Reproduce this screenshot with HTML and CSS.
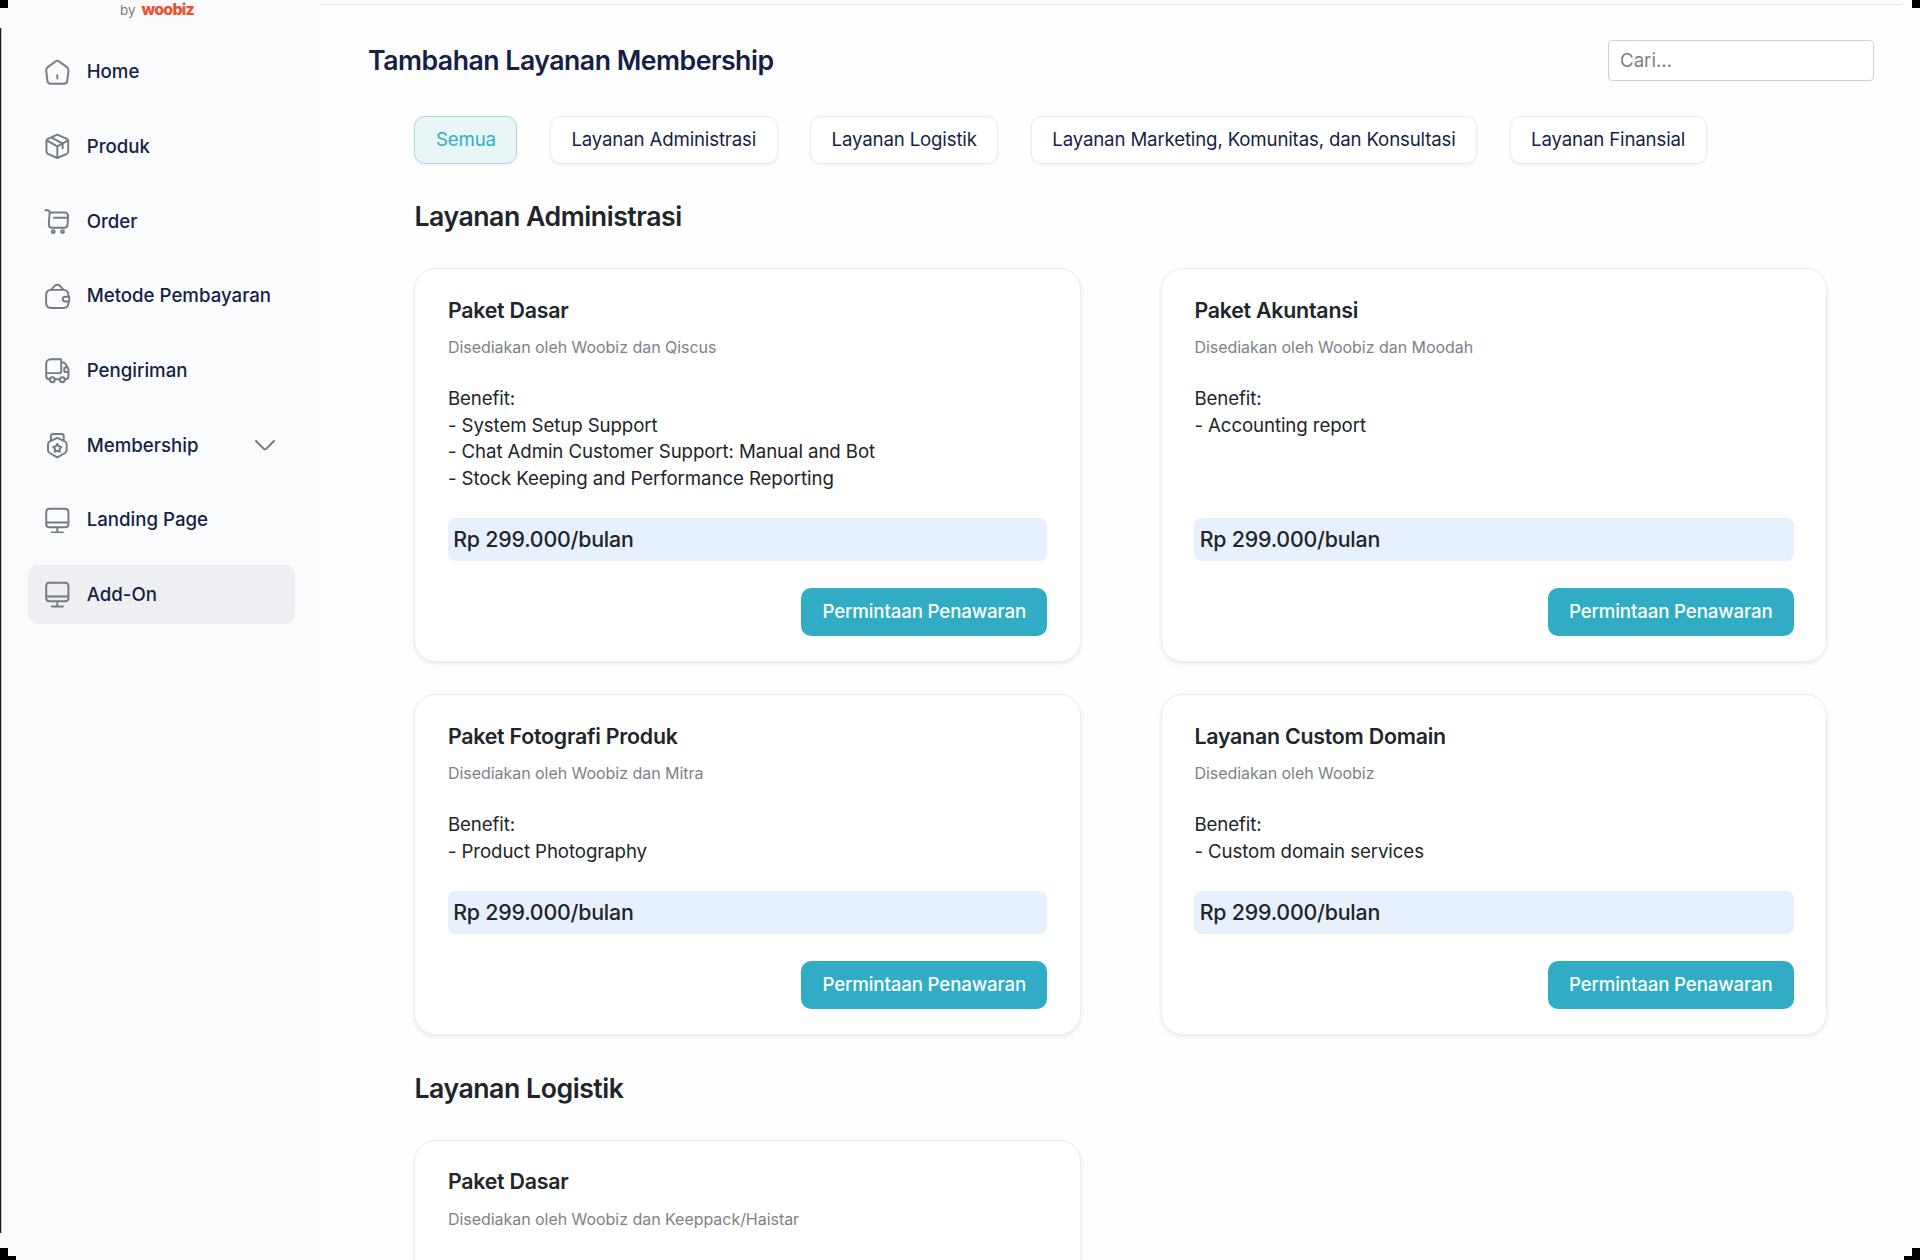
FILE: index.html
```html
<!DOCTYPE html>
<html lang="id">
<head>
<meta charset="utf-8">
<title>Tambahan Layanan Membership</title>
<link rel="stylesheet" href="styles.css">
</head>
<body>
<div class="app">
  <aside class="sidebar">
    <div class="brand"><span class="brand-by">by</span><span class="brand-name">woobiz</span></div>
    <nav class="nav">
      <a class="nav-item"><svg class="icon" viewBox="0 0 24 24"><path d="M10.600 2 3.400 7.300c-1 .8-1.500 2-1.400 3.300l1.100 9c.2 1.500 1.400 2.600 2.900 2.600h12c1.500 0 2.700-1.100 2.900-2.600l1.100-9c.1-1.300-.4-2.500-1.400-3.300l-7.200-5.300c-.8-.6-2-.6-2.800 0ZM12 17.500v-3"/></svg><span>Home</span></a>
      <a class="nav-item"><svg class="icon" viewBox="0 0 24 24"><path d="M12 1.500 20.500 5.300c.8.400 1.300 1.200 1.300 2.200v9c0 1-.5 1.800-1.300 2.200L12 22.500l-8.500-3.800c-.8-.400-1.300-1.200-1.300-2.200v-9c0-1 .5-1.800 1.300-2.200ZM2.800 6.800 12 12l9.200-5.200M12 12v10.300M7 4.200l9.800 5.400v4.200"/></svg><span>Produk</span></a>
      <a class="nav-item"><svg class="icon" viewBox="0 0 24 24"><path d="M1.300 2h1.900c1.200 0 2 .9 1.900 2.100L4.300 14.700c-.1 1.700 1.100 3.100 2.800 3.100h11.100c1.600 0 2.900-1.200 3-2.800l.5-7.700c.1-1.700-1.200-3.200-2.900-3.200H5.200M9 8.800h12.300"/><circle cx="8.300" cy="21.300" r="1.300"/><circle cx="16.700" cy="21.300" r="1.300"/></svg><span>Order</span></a>
      <a class="nav-item"><svg class="icon" viewBox="0 0 24 24"><path d="M22 12.400V11c0-3-1.600-4.800-4.600-4.800H6.500C3.600 6.200 1.900 8 1.900 11v6.800c0 3 1.700 4.700 4.600 4.700h10.900c3 0 4.600-1.700 4.600-4.700v-1.100M22.700 12.300v4.300h-3.400c-1.300 0-2.400-.9-2.400-2.200s1.100-2.100 2.400-2.100ZM6.300 6.200l3.300-3.600c1.300-1.400 3.500-1.400 4.800 0l3.300 3.600"/></svg><span>Metode Pembayaran</span></a>
      <a class="nav-item"><svg class="icon" viewBox="0 0 24 24"><path d="M15.500 2v10.500c0 1.100-.9 2-2 2H2V6c0-2.200 1.800-4 4-4ZM2 14.500V17c0 1.700 1.300 3 3 3M15.500 5h2c.7 0 1.400.4 1.700 1l2.300 4c.3.500.5 1 .5 1.500V17c0 1.700-1.300 3-3 3M10 20h4M21.600 13.500h-2.400c-.6 0-1-.4-1-1v-2c0-.6.4-1 1-1h2"/><circle cx="7.500" cy="20.500" r="2.200"/><circle cx="16.500" cy="20.500" r="2.200"/></svg><span>Pengiriman</span></a>
      <a class="nav-item"><svg class="icon" viewBox="0 0 24 24"><path d="M12 5.200 18.800 8.500c1 .5 1.600 1.400 1.600 2.500v5.400c0 1-.5 2-1.500 2.500L12 22.800l-6.900-3.900c-1-.5-1.500-1.500-1.500-2.500V11c0-1.100.6-2 1.600-2.500ZM6.200 7.700V3.800c0-1.200.8-2 2-2h7.600c1.200 0 2 .8 2 2v3.900M12 10.700l1.300 2.100 2.400.6-1.600 1.900.2 2.500-2.300-.9-2.300.9.200-2.500-1.600-1.900 2.400-.6Z"/></svg><span>Membership</span><svg class="chevron" viewBox="0 0 20 11"><path d="m1 1 7.600 7.700a2 2 0 0 0 2.800 0L19 1"/></svg></a>
      <a class="nav-item"><svg class="icon" viewBox="0 0 24 24"><path d="M5 1.500h14c2.200 0 3 .8 3 3v10.800c0 2.200-.8 3-3 3H5c-2.200 0-3-.8-3-3V4.500c0-2.200.8-3 3-3ZM12 18.500V23M2 14h20M7 23h10"/></svg><span>Landing Page</span></a>
      <a class="nav-item active"><svg class="icon" viewBox="0 0 24 24"><path d="M5 1.500h14c2.200 0 3 .8 3 3v10.800c0 2.200-.8 3-3 3H5c-2.200 0-3-.8-3-3V4.500c0-2.200.8-3 3-3ZM12 18.500V23M2 14h20M7 23h10"/></svg><span>Add-On</span></a>
    </nav>
  </aside>

  <main class="main">
    <header class="header">
      <h1 class="page-title">Tambahan Layanan Membership</h1>
      <input class="search" type="text" placeholder="Cari...">
    </header>
    <div class="content">
      <div class="chips">
        <button class="chip selected">Semua</button>
        <button class="chip">Layanan Administrasi</button>
        <button class="chip">Layanan Logistik</button>
        <button class="chip">Layanan Marketing, Komunitas, dan Konsultasi</button>
        <button class="chip">Layanan Finansial</button>
      </div>

      <h2 class="section-title">Layanan Administrasi</h2>
      <section class="grid">
        <article class="card">
          <h3 class="card-title">Paket Dasar</h3>
          <p class="provider">Disediakan oleh Woobiz dan Qiscus</p>
          <div class="benefit">Benefit:<br>- System Setup Support<br>- Chat Admin Customer Support: Manual and Bot<br>- Stock Keeping and Performance Reporting</div>
          <div class="price">Rp 299.000/bulan</div>
          <button class="cta">Permintaan Penawaran</button>
        </article>
        <article class="card">
          <h3 class="card-title">Paket Akuntansi</h3>
          <p class="provider">Disediakan oleh Woobiz dan Moodah</p>
          <div class="benefit">Benefit:<br>- Accounting report</div>
          <div class="price">Rp 299.000/bulan</div>
          <button class="cta">Permintaan Penawaran</button>
        </article>
        <article class="card">
          <h3 class="card-title">Paket Fotografi Produk</h3>
          <p class="provider">Disediakan oleh Woobiz dan Mitra</p>
          <div class="benefit">Benefit:<br>- Product Photography</div>
          <div class="price">Rp 299.000/bulan</div>
          <button class="cta">Permintaan Penawaran</button>
        </article>
        <article class="card">
          <h3 class="card-title">Layanan Custom Domain</h3>
          <p class="provider">Disediakan oleh Woobiz</p>
          <div class="benefit">Benefit:<br>- Custom domain services</div>
          <div class="price">Rp 299.000/bulan</div>
          <button class="cta">Permintaan Penawaran</button>
        </article>
      </section>

      <h2 class="section-title">Layanan Logistik</h2>
      <section class="grid">
        <article class="card card-tall">
          <h3 class="card-title">Paket Dasar</h3>
          <p class="provider">Disediakan oleh Woobiz dan Keeppack/Haistar</p>
        </article>
      </section>
    </div>
  </main>

  <i class="edge"></i>
  <i class="corner tl"></i>
  <i class="corner tr"></i>
  <i class="corner bl"></i>
  <i class="corner bl-step"></i>
  <i class="corner br"></i>
  <i class="corner br-step"></i>
</div>
</body>
</html>
```
FILE: styles.css
```css
* { box-sizing: border-box; }

body {
  margin: 0;
  font-family: Inter, "Liberation Sans", sans-serif;
  font-size: 18.67px;
  color: #212529;
  background: #fefefe;
}

h1, h2, h3, p { margin: 0; }
button, input { font: inherit; }

.app {
  position: relative;
  display: flex;
  height: 1260px;
  overflow: hidden;
}

/* Sidebar */
.sidebar {
  flex: none;
  width: 320px;
  background: #fafbfd;
}

.brand {
  display: flex;
  align-items: baseline;
  gap: 6px;
  height: 42.67px;
  padding-left: 120px;
  line-height: 18px;
}

.brand-by { font-size: 13.33px; color: #777b80; }

.brand-name {
  font-size: 16px;
  font-weight: 800;
  letter-spacing: -0.8px;
  color: #f04e30;
}

.nav {
  display: flex;
  flex-direction: column;
  gap: 16px;
  padding: 0 25px 0 28px;
}

.nav-item {
  display: flex;
  align-items: center;
  gap: 16px;
  height: 58.67px;
  padding: 0 20px 0 16px;
  border-radius: 10.67px;
  font-weight: 500;
  color: #171f46;
}

.nav-item.active { background: #edeff3; }

.icon {
  width: 26.67px;
  height: 26.67px;
  fill: none;
  stroke: #757b82;
  stroke-width: 1.75;
  stroke-linecap: round;
  stroke-linejoin: round;
}

.chevron {
  width: 20px;
  height: 11px;
  margin-left: auto;
  fill: none;
  stroke: #70767d;
  stroke-width: 1.8;
  stroke-linecap: round;
}

/* Main column */
.main {
  flex: 1;
  padding-top: 4px;
}

.main::before {
  content: "";
  display: block;
  height: 1px;
  margin-right: 18px;
  background: #e6e8ea;
}

.header {
  display: flex;
  justify-content: space-between;
  align-items: center;
  height: 111px;
  padding: 0 46px 1px 48px;
}

.page-title {
  font-size: 26.67px;
  font-weight: 600;
  letter-spacing: -0.5px;
  color: #171f46;
}

.search {
  width: 266px;
  height: 41px;
  padding: 0 11px;
  border: 1px solid #cfd2d4;
  border-radius: 4px;
  background: #fff;
}

.search::placeholder { color: #7b7f83; opacity: 1; }

.content { padding: 0 92.6px 0 94.4px; }

.chips {
  display: flex;
  gap: 32.3px;
}

.chip {
  height: 47.5px;
  padding: 0 20.6px;
  border: 1px solid #e9ebed;
  border-radius: 10.67px;
  background: #fff;
  color: #171f46;
  letter-spacing: -0.16px;
  box-shadow: 0 1px 3px rgba(0, 0, 0, 0.06);
}

.chip.selected {
  border-color: #a9d8d8;
  background: #e8f6f8;
  color: #30afc4;
}

.section-title {
  margin: 32.5px 0 31px;
  font-size: 26.67px;
  font-weight: 600;
  line-height: 41px;
  letter-spacing: -0.46px;
}

.grid {
  display: grid;
  grid-template-columns: 1fr 1fr;
  gap: 32px 80px;
}

.card {
  display: flex;
  flex-direction: column;
  padding: 24.5px 32.5px 25.5px;
  border: 1px solid #ececee;
  border-radius: 21.33px;
  background: #fff;
  box-shadow: 0 2px 4px rgba(0, 0, 0, 0.08);
}

.card-tall { min-height: 340px; }

.card-title {
  font-size: 21.33px;
  font-weight: 600;
  line-height: 32px;
  letter-spacing: -0.22px;
}

.provider {
  margin: 11.67px 0 27.67px;
  font-size: 16px;
  line-height: 21.33px;
  letter-spacing: -0.04px;
  color: #7d8287;
}

.benefit {
  flex: 1;
  line-height: 26.67px;
  letter-spacing: -0.09px;
}

.price {
  margin: 25.67px 0 26.67px;
  padding: 0 5.33px;
  border-radius: 8px;
  background: #e7f0fe;
  font-size: 21.33px;
  font-weight: 500;
  line-height: 42.67px;
  letter-spacing: -0.2px;
}

.cta {
  align-self: flex-end;
  height: 48px;
  padding: 0 21.33px;
  border: 0;
  border-radius: 10px;
  background: #30adc4;
  color: #fff;
  font-weight: 500;
  letter-spacing: -0.13px;
}

/* Window frame remnants over the page edges */
.edge {
  position: absolute;
  left: 0;
  top: 28px;
  width: 2px;
  height: 1205px;
  background: linear-gradient(90deg, #1c1c1e 50%, #c4c5c8 50%);
}

.corner {
  position: absolute;
  width: 8px;
  height: 8px;
  background: #000;
}

.tl { left: 0; top: 0; }
.tr { right: 0; top: 0; }
.bl { left: 0; bottom: 0; height: 12px; }
.bl-step { left: 8px; bottom: 0; height: 4px; }
.br { right: 0; bottom: 0; height: 12px; }
.br-step { right: 8px; bottom: 0; height: 4px; }
```
